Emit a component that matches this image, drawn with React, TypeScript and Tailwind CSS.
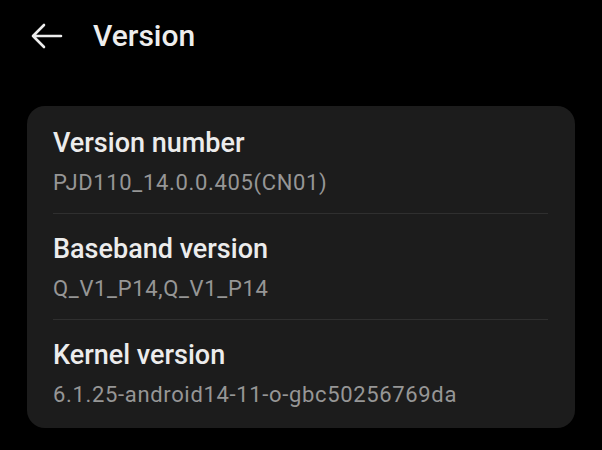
const items = [
  { title: "Version number", value: "PJD110_14.0.0.405(CN01)" },
  { title: "Baseband version", value: "Q_V1_P14,Q_V1_P14" },
  { title: "Kernel version", value: "6.1.25-android14-11-o-gbc50256769da" },
];

function BackArrow() {
  return (
    <svg width="32" height="26" viewBox="0 0 32 26" fill="none" className="text-[#ededed]">
      <path
        d="M2 13H30M13 2L2 13L13 24"
        stroke="currentColor"
        strokeWidth="2.6"
        strokeLinecap="round"
        strokeLinejoin="round"
      />
    </svg>
  );
}

function App() {
  return (
    <div
      className="w-[602px] h-[450px] bg-black overflow-hidden"
      style={{ fontFamily: "Roboto, 'Noto Sans', sans-serif" }}
    >
      <header className="h-[71px] flex items-center pl-[31px]">
        <BackArrow />
        <h1 className="ml-[30px] text-[30px] font-medium text-[#ededed] leading-none">
          Version
        </h1>
      </header>

      <div className="mt-[35px] mx-[27px] rounded-[18px] bg-[#1c1c1c] pt-[2px]">
        {items.map((item, index) => {
          const isLast = index === items.length - 1;
          return (
            <div key={item.title} className="pl-[26px] pr-[27px]">
              <div className={`pt-[19px] ${isLast ? "pb-[19px]" : "pb-[16px] border-b border-[#2f2f2f]"}`}>
                <p className="text-[27px] leading-[32px] font-medium text-[#ececec]">
                  {item.title}
                </p>
                <p className="mt-[10px] text-[22px] leading-[28px] text-[#969696] tracking-[0.03em]">
                  {item.value}
                </p>
              </div>
            </div>
          );
        })}
      </div>
    </div>
  );
}

export default App;
